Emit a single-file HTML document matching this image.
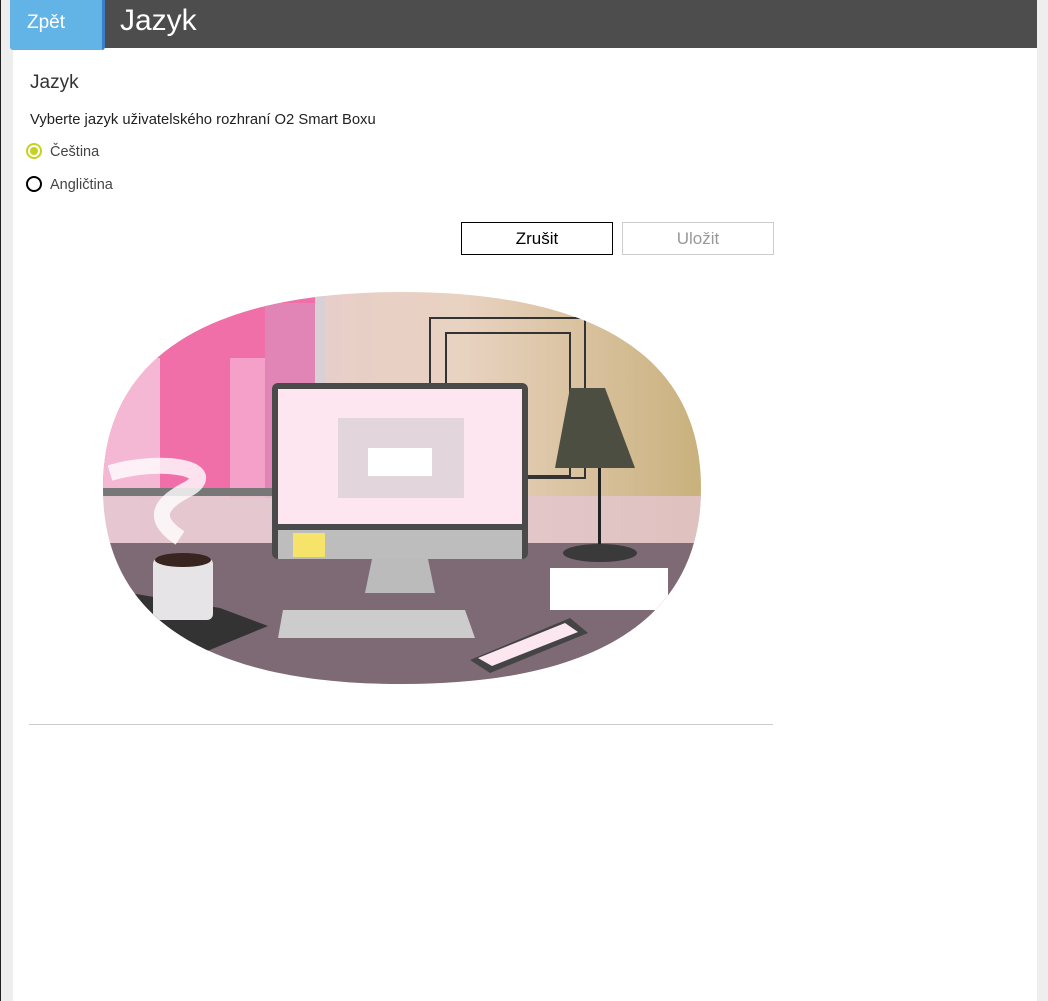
<!DOCTYPE html>
<html><head><meta charset="utf-8"><style>
html,body{margin:0;padding:0;width:1048px;height:1001px;overflow:hidden;background:#eee;font-family:"Liberation Sans",Arial,sans-serif}
.edge{position:absolute;left:0;top:0;width:1px;height:1001px;background:#222}
.main{position:absolute;left:13px;top:0;width:1024px;height:1001px;background:#fff}
.hdr{position:absolute;left:10px;top:0;width:1027px;height:48px;background:#4d4d4d}
.back{position:absolute;left:10px;top:0;width:92px;height:50px;background:#62b4e6;border-right:3px solid #3b7fc4;border-radius:0 0 3px 3px;color:#fff;font-size:19px;line-height:46px;text-indent:17px}
.title{position:absolute;left:120px;top:4px;color:#fff;font-size:30px}
.t{position:absolute;color:#333}
.radio{position:absolute;width:12px;height:12px;border-radius:50%;border:2px solid #000}
.btn{position:absolute;top:222px;width:150px;height:31px;font-size:17px;text-align:center;line-height:31px}
</style></head><body>
<div class="edge"></div>
<div class="main"></div>
<div class="hdr"></div>
<div class="back">Zpět</div>
<div class="title">Jazyk</div>
<div class="t" style="left:30px;top:72px;font-size:19px">Jazyk</div>
<div class="t" style="left:30px;top:112px;font-size:14.8px;color:#222">Vyberte jazyk uživatelského rozhraní O2 Smart Boxu</div>
<div class="radio" style="left:26px;top:143px;border-color:#c3d31e"><div style="margin:2px;width:8px;height:8px;border-radius:50%;background:#c3d31e"></div></div>
<div class="t" style="left:50px;top:144px;font-size:14.5px;color:#444">Čeština</div>
<div class="radio" style="left:26px;top:176px"></div>
<div class="t" style="left:50px;top:177px;font-size:14.5px;color:#444">Angličtina</div>
<div class="btn" style="left:461px;border:1px solid #000;color:#000">Zrušit</div>
<div class="btn" style="left:622px;border:1px solid #ccc;color:#999">Uložit</div>
<svg style="position:absolute;left:100px;top:288px" width="610" height="400">
<defs><clipPath id="c"><path d="M3,200 C3,50 140,4 302,4 C464,4 601,50 601,200 C601,350 464,396 302,396 C140,396 3,350 3,200Z"/></clipPath>
<linearGradient id="w" x1="0" x2="1"><stop offset="0" stop-color="#e9c8d6"/><stop offset="0.6" stop-color="#e8d2c0"/><stop offset="1" stop-color="#c8b07a"/></linearGradient></defs>
<g clip-path="url(#c)">
<rect width="610" height="400" fill="url(#w)"/>
<rect x="0" y="0" width="220" height="205" fill="#f06fa8"/>
<rect x="0" y="70" width="60" height="140" fill="#f4b8d4"/>
<rect x="130" y="70" width="50" height="140" fill="#f5a0c8"/>
<rect x="165" y="15" width="50" height="195" fill="#e184b6"/>
<rect x="215" y="0" width="10" height="215" fill="#d8d0d4"/>
<rect x="0" y="200" width="225" height="8" fill="#777"/>
<rect x="0" y="208" width="610" height="50" fill="#e4c6d0" opacity="0.8"/>
<rect x="0" y="255" width="610" height="145" fill="#7e6a75"/>
<rect x="330" y="30" width="155" height="160" fill="none" stroke="#333" stroke-width="2"/>
<rect x="346" y="45" width="124" height="143" fill="none" stroke="#333" stroke-width="2"/>
<rect x="172" y="95" width="256" height="176" rx="6" fill="#4a4a4a"/>
<rect x="178" y="101" width="244" height="135" fill="#fde6f0"/>
<rect x="178" y="242" width="244" height="29" fill="#bdbdbd"/>
<rect x="238" y="130" width="126" height="80" fill="#e2d6dc"/>
<rect x="268" y="160" width="64" height="28" fill="#fff"/>
<polygon points="272,271 328,271 335,305 265,305" fill="#bbb"/>
<rect x="193" y="245" width="32" height="24" fill="#f5e36a"/>
<polygon points="470,100 505,100 535,180 455,180" fill="#4d4e42"/>
<rect x="498" y="180" width="3" height="80" fill="#222"/>
<ellipse cx="500" cy="265" rx="37" ry="9" fill="#3a3a3a"/>
<rect x="450" y="280" width="118" height="42" fill="#fff"/>
<polygon points="183,322 365,322 375,350 178,350" fill="#ccc"/>
<polygon points="370,372 470,330 488,345 390,385" fill="#444"/>
<polygon points="378,370 465,335 478,344 392,378" fill="#fce6f0"/>
<polygon points="30,305 120,320 168,338 100,366 18,335" fill="#333"/>
<rect x="53" y="270" width="60" height="62" rx="6" fill="#e6e4e6"/>
<ellipse cx="83" cy="272" rx="28" ry="7" fill="#3a2420"/>
<path d="M10,185 C60,170 120,180 90,200 C60,215 50,230 80,250" stroke="#fff" stroke-width="16" fill="none" opacity="0.8"/>
</g></svg>
<div style="position:absolute;left:29px;top:724px;width:744px;height:1px;background:#ccc"></div>
</body></html>
